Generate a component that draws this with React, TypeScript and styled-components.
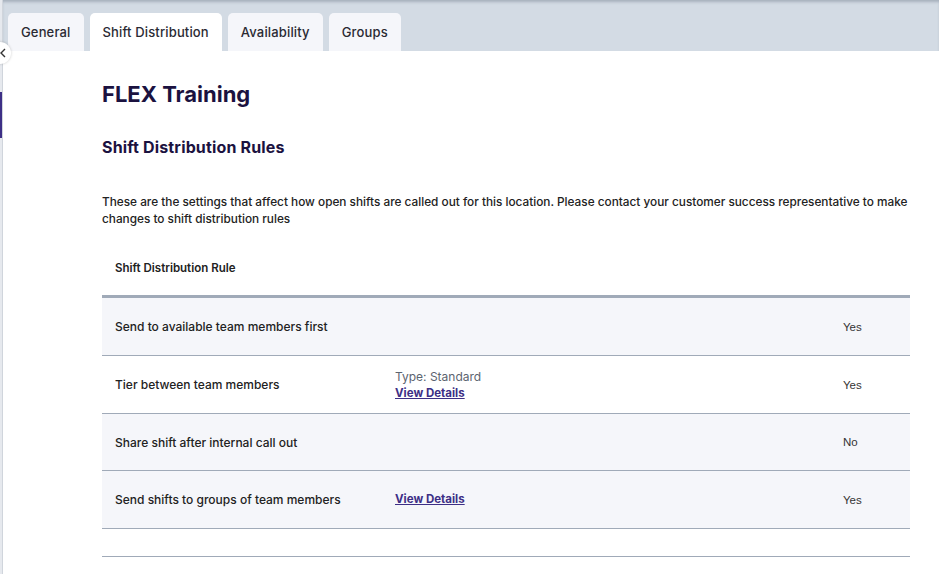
import React from "react";
import styled, { createGlobalStyle } from "styled-components";

const Global = createGlobalStyle`
  html, body { margin: 0; padding: 0; background: #ffffff; }
  body { font-family: "Inter", "Noto Sans", sans-serif; color: #222; overflow: hidden; }
  * { box-sizing: border-box; }
`;

const Shell = styled.div`
  display: flex;
  width: 939px;
  height: 574px;
  position: relative;
  overflow: hidden;
`;

const SideEdge = styled.div`
  width: 3px;
  flex: 0 0 3px;
  background: #e6e9ee;
  border-right: 1px solid #d0d5dc;
  display: flex;
  flex-direction: column;
`;

const SideMark = styled.div`
  margin-top: 92px;
  height: 46px;
  background: #3d2f86;
`;

const Main = styled.div`
  flex: 1;
  display: flex;
  flex-direction: column;
  min-width: 0;
`;

const TabBar = styled.div`
  height: 51px;
  background: #d3dbe4;
  box-shadow: inset 0 3px 3px -1px rgba(110, 125, 140, 0.45);
  display: flex;
  align-items: flex-end;
  gap: 6px;
  padding-left: 5px;
`;

const Tab = styled.div<{ $active?: boolean }>`
  height: 38px;
  padding: 0 13px 1px;
  display: flex;
  align-items: center;
  border-radius: 5px 5px 0 0;
  background: ${(p) => (p.$active ? "#ffffff" : "#f5f6fa")};
  font-size: 13px;
  letter-spacing: 0.15px;
  font-weight: 500;
  color: #2a2a33;
`;

const Collapse = styled.div`
  position: absolute;
  left: -11px;
  top: 42px;
  width: 22px;
  height: 22px;
  border-radius: 50%;
  background: #fff;
  box-shadow: 0 0 3px rgba(0, 0, 0, 0.2);
  display: flex;
  align-items: center;
  justify-content: flex-end;
  padding-right: 4px;
`;

const Content = styled.div`
  padding: 29px 29px 0 99px;
  display: flex;
  flex-direction: column;
`;

const Title = styled.h1`
  margin: 0;
  font-size: 22px;
  font-weight: 700;
  color: #1b1240;
  line-height: 28px;
`;

const SubTitle = styled.h2`
  margin: 29px 0 0;
  font-size: 16px;
  letter-spacing: 0.15px;
  font-weight: 700;
  color: #1b1240;
  line-height: 20px;
`;

const Para = styled.p`
  margin: 37px 0 0;
  font-size: 11.8px;
  font-weight: 500;
  line-height: 17px;
  color: #222;
`;

const Table = styled.div`
  margin-top: 14px;
  display: flex;
  flex-direction: column;
`;

const HeadRow = styled.div`
  height: 56px;
  border-bottom: 3px solid #a0aab8;
  display: flex;
  align-items: center;
  padding: 0 0 2px 13px;
  font-size: 11.5px;
  font-weight: 600;
  color: #222;
`;

const Row = styled.div<{ $shaded?: boolean; $h: number }>`
  display: grid;
  grid-template-columns: 280px 1fr 67px;
  align-items: center;
  height: ${(p) => p.$h}px;
  background: ${(p) => (p.$shaded ? "#f5f6fa" : "#ffffff")};
  border-bottom: 1px solid #a0aab8;
  padding-left: 13px;
`;

const Label = styled.div`
  font-size: 12px;
  font-weight: 500;
  color: #222;
`;

const Middle = styled.div`
  display: flex;
  flex-direction: column;
  gap: 2px;
`;

const Meta = styled.div`
  font-size: 12px;
  line-height: 15px;
  color: #5c6470;
`;

const Link = styled.a`
  font-size: 11.5px;
  line-height: 15px;
  font-weight: 700;
  color: #3d2f86;
  text-decoration: underline;
`;

const Value = styled.div`
  font-family: "Liberation Sans", Arial, sans-serif;
  font-size: 11.5px;
  color: #333;
`;

const rows = [
  { label: "Send to available team members first", value: "Yes", shaded: true, h: 58 },
  { label: "Tier between team members", meta: "Type: Standard", link: true, value: "Yes", shaded: false, h: 58 },
  { label: "Share shift after internal call out", value: "No", shaded: true, h: 57 },
  { label: "Send shifts to groups of team members", link: true, value: "Yes", shaded: true, h: 58 },
];

export default function App() {
  return (
    <>
      <Global />
      <Shell>
        <SideEdge>
          <SideMark />
        </SideEdge>
        <Main>
          <TabBar>
            <Tab>General</Tab>
            <Tab $active>Shift Distribution</Tab>
            <Tab>Availability</Tab>
            <Tab>Groups</Tab>
          </TabBar>
          <Content>
            <Title>FLEX Training</Title>
            <SubTitle>Shift Distribution Rules</SubTitle>
            <Para>
              These are the settings that affect how open shifts are called out for this location. Please contact your
              customer success representative to make changes to shift distribution rules
            </Para>
            <Table>
              <HeadRow>Shift Distribution Rule</HeadRow>
              {rows.map((r) => (
                <Row key={r.label} $shaded={r.shaded} $h={r.h}>
                  <Label>{r.label}</Label>
                  <Middle>
                    {r.meta && <Meta>{r.meta}</Meta>}
                    {r.link && <Link href="#">View Details</Link>}
                  </Middle>
                  <Value>{r.value}</Value>
                </Row>
              ))}
              <Row $h={28} />
            </Table>
          </Content>
        </Main>
        <Collapse>
          <svg width="8" height="10" viewBox="0 0 8 10">
            <path d="M6 1 L2 5 L6 9" fill="none" stroke="#333" strokeWidth="1.4" />
          </svg>
        </Collapse>
      </Shell>
    </>
  );
}
